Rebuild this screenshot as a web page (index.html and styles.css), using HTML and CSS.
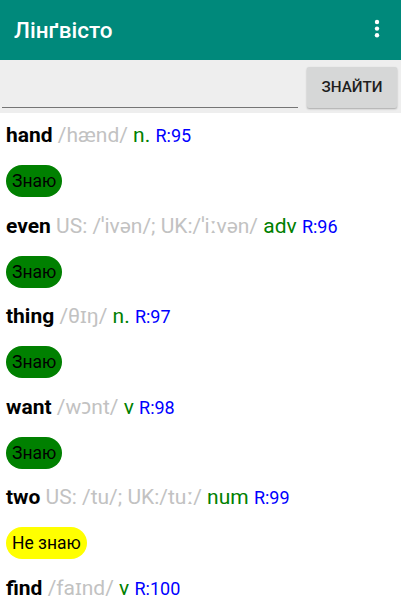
FILE: index.html
```html
<!DOCTYPE html>
<html>
<head>
<meta charset="utf-8">
<link rel="stylesheet" href="styles.css">
</head>
<body>
<header class="appbar">
  <div class="title">Лінґвісто</div>
  <svg class="menu" width="6" height="20" viewBox="0 0 6 20"><circle cx="3" cy="3" r="2.2" fill="#fff"/><circle cx="3" cy="9.6" r="2.2" fill="#fff"/><circle cx="3" cy="16.2" r="2.2" fill="#fff"/></svg>
</header>
<div class="search">
  <div class="field"></div>
  <button class="btn">ЗНАЙТИ</button>
</div>
<main class="list">
  <div class="item">
    <div class="line"><b class="w">hand</b> <span class="tr">/hænd/</span> <span class="pos">n.</span> <span class="rank">R:95</span></div>
    <div class="pill know">Знаю</div>
  </div>
  <div class="item">
    <div class="line"><b class="w">even</b> <span class="tr">US: /ˈivən/; UK:/ˈiːvən/</span> <span class="pos">adv</span> <span class="rank">R:96</span></div>
    <div class="pill know">Знаю</div>
  </div>
  <div class="item">
    <div class="line"><b class="w">thing</b> <span class="tr">/θɪŋ/</span> <span class="pos">n.</span> <span class="rank">R:97</span></div>
    <div class="pill know">Знаю</div>
  </div>
  <div class="item">
    <div class="line"><b class="w">want</b> <span class="tr">/wɔnt/</span> <span class="pos">v</span> <span class="rank">R:98</span></div>
    <div class="pill know">Знаю</div>
  </div>
  <div class="item">
    <div class="line"><b class="w">two</b> <span class="tr">US: /tu/; UK:/tuː/</span> <span class="pos">num</span> <span class="rank">R:99</span></div>
    <div class="pill dunno">Не знаю</div>
  </div>
  <div class="item">
    <div class="line"><b class="w">find</b> <span class="tr">/faɪnd/</span> <span class="pos">v</span> <span class="rank">R:100</span></div>
  </div>
</main>
</body>
</html>
```
FILE: styles.css
```css
html, body {
  margin: 0;
  padding: 0;
}
body {
  font-family: Roboto, "Noto Sans", sans-serif;
  background: #fff;
  width: 401px;
  height: 605px;
  overflow: hidden;
}
.appbar {
  height: 60px;
  background: #00897b;
  display: flex;
  align-items: center;
  justify-content: space-between;
  padding: 0 21px 0 14px;
}
.title {
  color: #fff;
  font-size: 22.5px;
  font-weight: 500;
  margin-top: -1px;
}
.menu {
  display: block;
  margin-top: -2px;
}
.search {
  background: #eeeeee;
  height: 53px;
  display: flex;
  align-items: center;
  padding: 0 4px 0 2px;
  gap: 9px;
}
.field {
  flex: 1;
  height: 40px;
  border-bottom: 1px solid #757575;
  margin-top: 2px;
}
.btn {
  width: 90px;
  height: 41px;
  border: none;
  border-radius: 2px;
  background: #d6d7d7;
  box-shadow: 0 1px 2px rgba(0,0,0,0.3);
  font-family: Roboto, sans-serif;
  font-size: 15.25px;
  font-weight: 500;
  color: #1e1e1e;
  padding: 0;
  margin-top: 1px;
}
.list {
  padding: 0 6px;
}
.item {
  display: flex;
  flex-direction: column;
  align-items: flex-start;
}
.line {
  height: 44px;
  line-height: 44px;
  white-space: nowrap;
  font-size: 21px;
  margin-bottom: 8px;
}
.w {
  font-weight: 700;
  color: #000;
}
.tr {
  color: #c2c2c2;
}
.pos {
  color: #008000;
}
.rank {
  color: #0000ff;
  font-size: 18px;
}
.pill {
  height: 32px;
  border-radius: 16px;
  padding: 0 6px;
  display: flex;
  align-items: center;
  font-size: 17.5px;
  color: #000;
  margin-bottom: 6.5px;
}
.know {
  background: #008000;
}
.dunno {
  background: #ffff00;
}
```
